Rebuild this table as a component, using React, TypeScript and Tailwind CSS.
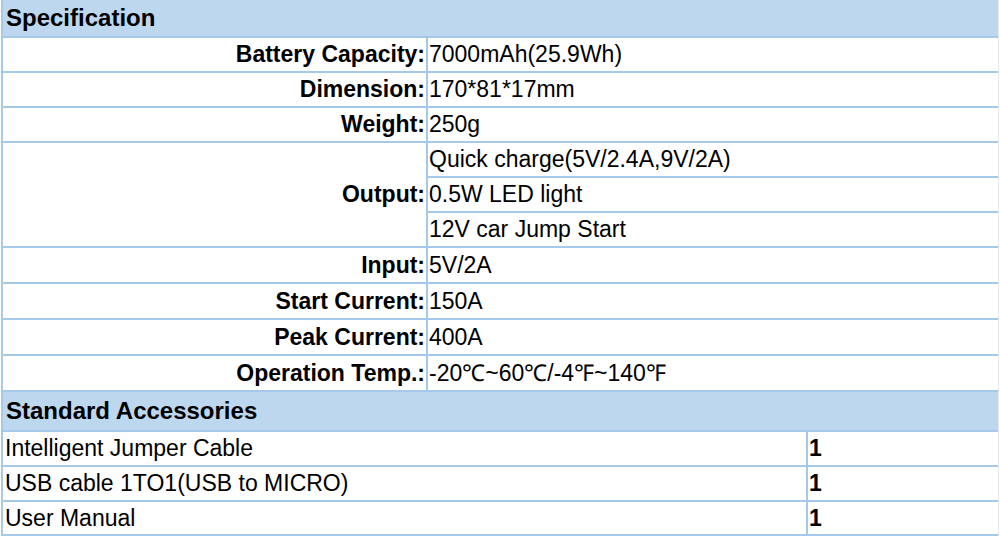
const specRows: { label: string; values: string[]; h: string }[] = [
  { label: 'Battery Capacity:', values: ['7000mAh(25.9Wh)'], h: 'h-[35px]' },
  { label: 'Dimension:', values: ['170*81*17mm'], h: 'h-[35px]' },
  { label: 'Weight:', values: ['250g'], h: 'h-[35px]' },
  {
    label: 'Output:',
    values: ['Quick charge(5V/2.4A,9V/2A)', '0.5W LED light', '12V car Jump Start'],
    h: 'h-[35px]',
  },
  { label: 'Input:', values: ['5V/2A'], h: 'h-[36px]' },
  { label: 'Start Current:', values: ['150A'], h: 'h-[36px]' },
  { label: 'Peak Current:', values: ['400A'], h: 'h-[36px]' },
  { label: 'Operation Temp.:', values: ['-20℃~60℃/-4℉~140℉'], h: 'h-[36px]' },
];

const accessories = [
  { name: 'Intelligent Jumper Cable', qty: '1', h: 'h-[35px]' },
  { name: 'USB cable 1TO1(USB to MICRO)', qty: '1', h: 'h-[35px]' },
  { name: 'User Manual', qty: '1', h: 'h-[34px]' },
];

export default function App() {
  return (
    <div
      className="w-[1000px] h-[536px] overflow-hidden bg-white text-black leading-none"
      style={{ fontFamily: '"Liberation Sans", Arial, sans-serif' }}
    >
      <div className="ml-[1px] w-[998px] border-l-2 border-r border-l-[#a6c9ea] border-r-[#e4e8ec]">
        {/* Specification */}
        <div className="h-[38px] bg-[#bdd7ee] border-b-2 border-[#a6c9ea] flex items-center pl-[3px] text-[24px] font-bold">
          Specification
        </div>
        {specRows.map((row) => (
          <div key={row.label} className="flex">
            <div className="w-[425px] shrink-0 border-r-2 border-b-2 border-[#a6c9ea] flex items-center justify-end pr-[1px] text-[23px] font-bold">
              {row.label}
            </div>
            <div className="flex-1 flex flex-col">
              {row.values.map((v) => (
                <div
                  key={v}
                  className={`${row.h} flex items-center pl-[1px] text-[23px] border-b-2 border-[#a6c9ea]`}
                >
                  {v}
                </div>
              ))}
            </div>
          </div>
        ))}

        {/* Standard Accessories */}
        <div className="h-[40px] bg-[#bdd7ee] border-b-2 border-[#a6c9ea] flex items-center pl-[3px] text-[24px] font-bold">
          Standard Accessories
        </div>
        {accessories.map((a) => (
          <div key={a.name} className={`flex ${a.h} border-b-2 border-[#a6c9ea]`}>
            <div className="w-[805px] shrink-0 border-r-2 border-[#a6c9ea] flex items-center pl-[2px] text-[23px]">
              {a.name}
            </div>
            <div className="flex-1 flex items-center pl-[1px] text-[23px] font-bold">{a.qty}</div>
          </div>
        ))}
      </div>
    </div>
  );
}
